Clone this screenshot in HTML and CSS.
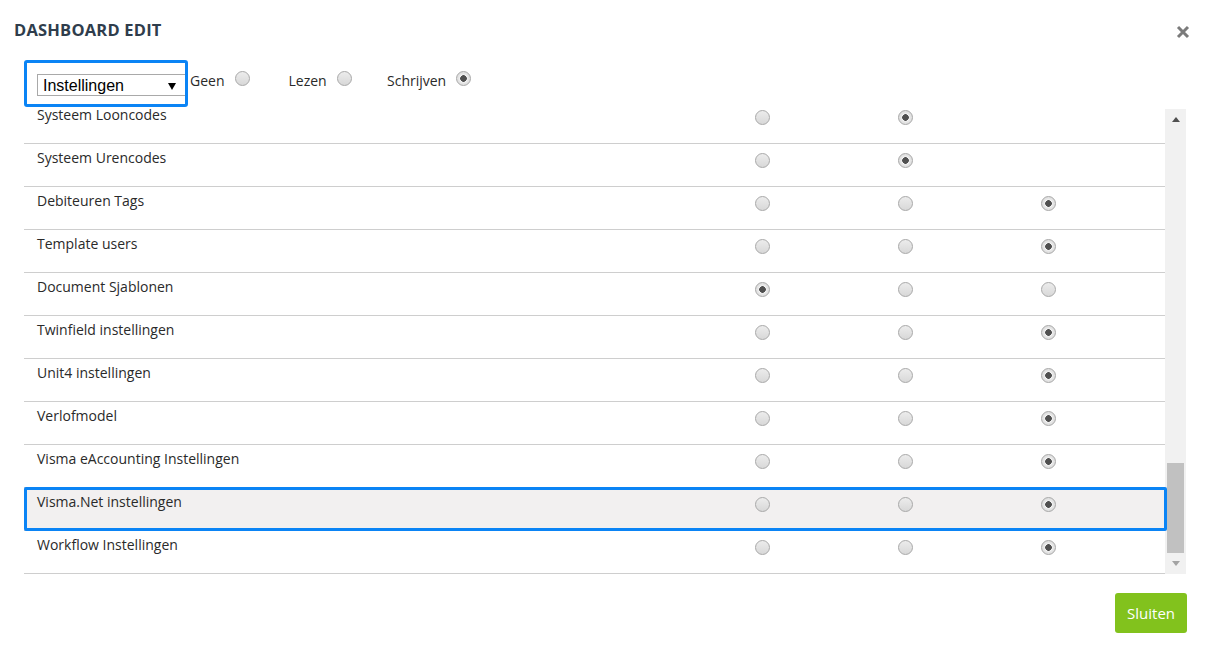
FILE: index.html
```html
<!DOCTYPE html>
<html lang="nl">
<head>
  <meta charset="UTF-8" />
  <meta name="viewport" content="width=device-width, initial-scale=1.0" />
  <title>Dashboard edit</title>
  <link rel="stylesheet" href="styles.css">
</head>
<body>
  <div class="modal">
    <div class="modal-header">
      <h2 class="modal-title">DASHBOARD EDIT</h2>
      <button class="close" aria-label="Sluiten">
        <svg width="14" height="14" viewBox="0 0 14 14">
          <path d="M2 2 L12 12 M12 2 L2 12" stroke="#7b7b7b" stroke-width="3" stroke-linecap="butt" />
        </svg>
      </button>
    </div>

    <div class="modal-body">
      <div class="toolbar">
        <div class="select-wrap is-focused">
          <select>
            <option>Instellingen</option>
          </select>
        </div>
        <div class="legend">
          <label class="legend-item">Geen <input type="radio" class="radio" name="all"></label>
          <label class="legend-item">Lezen <input type="radio" class="radio" name="all"></label>
          <label class="legend-item">Schrijven <input type="radio" class="radio" name="all" checked></label>
        </div>
      </div>

      <div class="grid">
        <div class="rows-viewport">
          <div class="rows">
            <div class="row">
              <div class="row-label">Systeem Looncodes</div>
              <div class="cell"><input type="radio" class="radio" name="r1"></div>
              <div class="cell"><input type="radio" class="radio" name="r1" checked></div>
              <div class="cell"></div>
            </div>
            <div class="row">
              <div class="row-label">Systeem Urencodes</div>
              <div class="cell"><input type="radio" class="radio" name="r2"></div>
              <div class="cell"><input type="radio" class="radio" name="r2" checked></div>
              <div class="cell"></div>
            </div>
            <div class="row">
              <div class="row-label">Debiteuren Tags</div>
              <div class="cell"><input type="radio" class="radio" name="r3"></div>
              <div class="cell"><input type="radio" class="radio" name="r3"></div>
              <div class="cell"><input type="radio" class="radio" name="r3" checked></div>
            </div>
            <div class="row">
              <div class="row-label">Template users</div>
              <div class="cell"><input type="radio" class="radio" name="r4"></div>
              <div class="cell"><input type="radio" class="radio" name="r4"></div>
              <div class="cell"><input type="radio" class="radio" name="r4" checked></div>
            </div>
            <div class="row">
              <div class="row-label">Document Sjablonen</div>
              <div class="cell"><input type="radio" class="radio" name="r5" checked></div>
              <div class="cell"><input type="radio" class="radio" name="r5"></div>
              <div class="cell"><input type="radio" class="radio" name="r5"></div>
            </div>
            <div class="row">
              <div class="row-label">Twinfield instellingen</div>
              <div class="cell"><input type="radio" class="radio" name="r6"></div>
              <div class="cell"><input type="radio" class="radio" name="r6"></div>
              <div class="cell"><input type="radio" class="radio" name="r6" checked></div>
            </div>
            <div class="row">
              <div class="row-label">Unit4 instellingen</div>
              <div class="cell"><input type="radio" class="radio" name="r7"></div>
              <div class="cell"><input type="radio" class="radio" name="r7"></div>
              <div class="cell"><input type="radio" class="radio" name="r7" checked></div>
            </div>
            <div class="row">
              <div class="row-label">Verlofmodel</div>
              <div class="cell"><input type="radio" class="radio" name="r8"></div>
              <div class="cell"><input type="radio" class="radio" name="r8"></div>
              <div class="cell"><input type="radio" class="radio" name="r8" checked></div>
            </div>
            <div class="row">
              <div class="row-label">Visma eAccounting Instellingen</div>
              <div class="cell"><input type="radio" class="radio" name="r9"></div>
              <div class="cell"><input type="radio" class="radio" name="r9"></div>
              <div class="cell"><input type="radio" class="radio" name="r9" checked></div>
            </div>
            <div class="row is-active">
              <div class="row-label">Visma.Net instellingen</div>
              <div class="cell"><input type="radio" class="radio" name="r10"></div>
              <div class="cell"><input type="radio" class="radio" name="r10"></div>
              <div class="cell"><input type="radio" class="radio" name="r10" checked></div>
            </div>
            <div class="row">
              <div class="row-label">Workflow Instellingen</div>
              <div class="cell"><input type="radio" class="radio" name="r11"></div>
              <div class="cell"><input type="radio" class="radio" name="r11"></div>
              <div class="cell"><input type="radio" class="radio" name="r11" checked></div>
            </div>
          </div>
        </div>

        <div class="scrollbar">
          <div class="sb-btn"><span class="arrow-up"></span></div>
          <div class="sb-track"><div class="sb-thumb"></div></div>
          <div class="sb-btn"><span class="arrow-down"></span></div>
        </div>
      </div>
    </div>

    <div class="modal-footer">
      <button class="btn-primary">Sluiten</button>
    </div>
  </div>
</body>
</html>
```

FILE: styles.css
```css
:root {
  --text: #2a2a2a;
  --title: #2f3d4c;
  --line: #cecece;
  --focus: #0b84f5;
  --green: #82c21d;
  --row-active: #f2f0f0;
}

*,
*::before,
*::after {
  box-sizing: border-box;
}

body {
  margin: 0;
  font-family: "Open Sans", "Noto Sans", sans-serif;
  font-size: 14px;
  color: var(--text);
  background: #fff;
}

.modal {
  width: 1212px;
  height: 652px;
}

/* header */
.modal-header {
  display: flex;
  justify-content: space-between;
  align-items: flex-start;
  padding: 20px 22px 0 14px;
}

.modal-title {
  margin: 0;
  font-size: 16.5px;
  line-height: 20px;
  font-weight: 700;
  letter-spacing: 0.2px;
  color: var(--title);
}

.close {
  width: 14px;
  height: 14px;
  margin-top: 5px;
  padding: 0;
  border: none;
  background: none;
  cursor: pointer;
}

.close svg {
  display: block;
}

.modal-body {
  padding: 0 26px 0 24px;
}

/* toolbar with module select and column legend */
.toolbar {
  display: flex;
  align-items: flex-start;
  height: 25px;
  margin-top: 31px;
  padding-left: 13px;
}

.select-wrap {
  position: relative;
  width: 150px;
  height: 22px;
  margin-top: 3px;
  border: 1px solid #a9a9a9;
  background: #fff;
}

.select-wrap select {
  appearance: none;
  width: 100%;
  height: 100%;
  padding: 0 0 0 5px;
  border: none;
  background: transparent;
  font-family: "Liberation Sans", Arial, sans-serif;
  font-size: 16px;
  color: #000;
  outline: none;
}

.select-wrap::before {
  content: "";
  position: absolute;
  right: 10px;
  top: 8px;
  border-left: 4px solid transparent;
  border-right: 4px solid transparent;
  border-top: 7px solid #000;
  pointer-events: none;
}

.select-wrap.is-focused::after {
  content: "";
  position: absolute;
  left: -14px;
  top: -15px;
  width: 164px;
  height: 47px;
  border: 3px solid var(--focus);
  border-radius: 3px;
  pointer-events: none;
}

.legend {
  display: flex;
  margin-left: 3px;
}

.legend-item {
  display: flex;
  align-items: flex-start;
  gap: 10px;
  width: 98.5px;
  line-height: 20px;
}

/* radios */
.radio {
  appearance: none;
  width: 15px;
  height: 15px;
  margin: 0;
  border: 1px solid #a8a8a8;
  border-radius: 50%;
  background: linear-gradient(#ececec, #d8d8d8);
}

.radio:checked {
  background: radial-gradient(circle, #505050 0 3px, #f2f2f2 3.6px, #e4e4e4 5px, #d6d6d6 100%);
}

/* permissions list */
.grid {
  display: flex;
  height: 465px;
  margin-top: 13px;
}

.rows-viewport {
  flex: 1;
  clip-path: inset(0 -6px 0 0);
}

.rows {
  margin-top: -8px;
}

.row {
  position: relative;
  display: grid;
  grid-template-columns: 1fr 143px 143px 143px;
  height: 43px;
  padding-right: 45px;
  border-bottom: 1px solid var(--line);
}

.row-label {
  padding: 4px 0 0 13px;
  line-height: 20px;
}

.cell {
  display: flex;
  justify-content: center;
  padding-top: 9px;
}

.row.is-active {
  background: var(--row-active);
}

.row.is-active::after {
  content: "";
  position: absolute;
  top: -1px;
  left: 0;
  right: -2px;
  bottom: -1px;
  border: 3px solid var(--focus);
  border-radius: 2px;
  pointer-events: none;
}

/* scrollbar */
.scrollbar {
  display: flex;
  flex-direction: column;
  width: 21px;
  background: #f1f1f1;
}

.sb-btn {
  display: flex;
  align-items: center;
  justify-content: center;
  height: 21px;
}

.arrow-up {
  border-left: 4.5px solid transparent;
  border-right: 4.5px solid transparent;
  border-bottom: 5px solid #505050;
}

.arrow-down {
  border-left: 4.5px solid transparent;
  border-right: 4.5px solid transparent;
  border-top: 5px solid #a3a3a3;
}

.sb-track {
  flex: 1;
  display: flex;
  flex-direction: column;
  justify-content: flex-end;
}

.sb-thumb {
  height: 90px;
  margin: 0 2px;
  background: #c1c1c1;
}

/* footer */
.modal-footer {
  display: flex;
  justify-content: flex-end;
  padding: 19px 25px 0 0;
}

.btn-primary {
  height: 40px;
  padding: 0 12px;
  border: none;
  border-radius: 3px;
  background: var(--green);
  color: #fff;
  font-family: "Open Sans", sans-serif;
  font-size: 15px;
  cursor: pointer;
}
```
